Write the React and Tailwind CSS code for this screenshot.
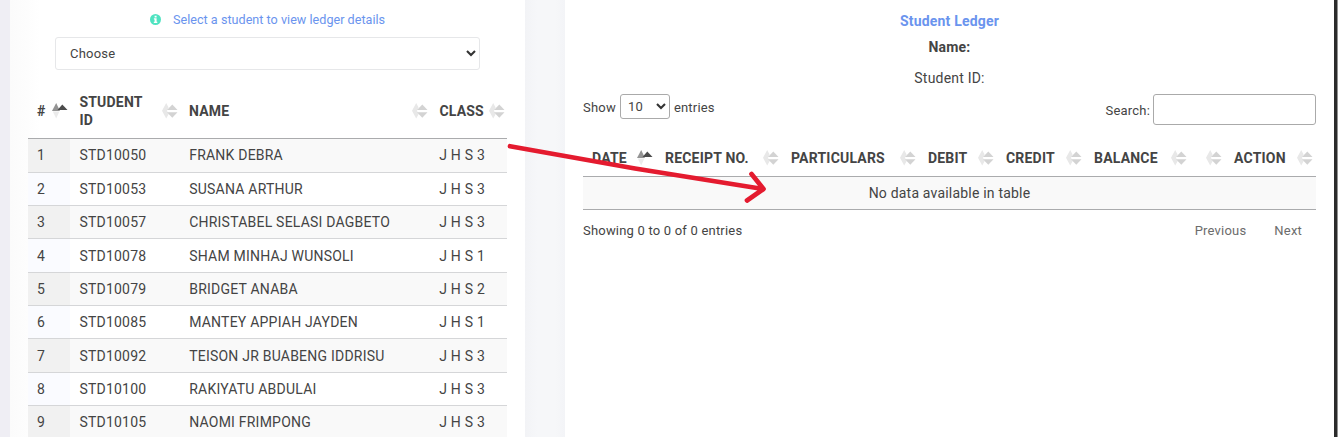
import React from "react";

function SortIcon({ active = false }) {
  return (
    <svg width="16" height="16" viewBox="0 0 16 16" className="block shrink-0">
      {active ? (
        <>
          <path d="M0 8L4.2 0L8 8Z" fill="#949494" />
          <path d="M0.8 8.4H7.4L4.2 15.5Z" fill="#ebebeb" />
          <path d="M5.5 6.9L10.3 1.5L15.5 6.9Z" fill="#4b4b4b" />
        </>
      ) : (
        <>
          <path d="M0 7.8L4.2 0L6.6 4.5L5 7.8L6.6 11.2L4.2 15.5Z" fill="#e8e8e8" />
          <path d="M5 7L10.3 1.5L15.5 7Z" fill="#d3d3d3" />
          <path d="M5 9.3H15.5L10.3 14.8Z" fill="#d3d3d3" />
        </>
      )}
    </svg>
  );
}

function Chevron() {
  return (
    <svg width="10" height="7" viewBox="0 0 10 7" className="shrink-0">
      <path d="M1 1L5 5L9 1" fill="none" stroke="#333" strokeWidth="2.1" />
    </svg>
  );
}

const students = [
  ["STD10050", "FRANK DEBRA", "J H S 3", "h-[34px] leading-[33px]"],
  ["STD10053", "SUSANA ARTHUR", "J H S 3", "h-[33px] leading-[32px]"],
  ["STD10057", "CHRISTABEL SELASI DAGBETO", "J H S 3", "h-[33px] leading-[32px]"],
  ["STD10078", "SHAM MINHAJ WUNSOLI", "J H S 1", "h-[34px] leading-[34px]"],
  ["STD10079", "BRIDGET ANABA", "J H S 2", "h-[33px] leading-[32px]"],
  ["STD10085", "MANTEY APPIAH JAYDEN", "J H S 1", "h-[33px] leading-[32px]"],
  ["STD10092", "TEISON JR BUABENG IDDRISU", "J H S 3", "h-[34px] leading-[34px]"],
  ["STD10100", "RAKIYATU ABDULAI", "J H S 3", "h-[33px] leading-[32px]"],
  ["STD10105", "NAOMI FRIMPONG", "J H S 3", "h-[33px] leading-[32px]"],
];

const studentGrid = "grid grid-cols-[42px_110px_250px_77px]";

const ledgerColumns = ["DATE", "RECEIPT NO.", "PARTICULARS", "DEBIT", "CREDIT", "BALANCE", "", "ACTION"];

function StudentPanel() {
  return (
    <section className="w-[515px] shrink-0 bg-[linear-gradient(90deg,#fbfbfb_0px,#fdfdfd_18px,#fff_30px)] pl-[18px]">
      <div className="flex h-[37px] items-center pt-[2px] pl-[122px] text-[12.6px]">
        <svg width="11" height="11" viewBox="0 0 11 11">
          <circle cx="5.5" cy="5.5" r="5.5" fill="#4fe3c1" />
          <path d="M4.6 1.7h2v1.7h-2zM3.9 4.3h2.7v3.4h.7v1.2H3.8V7.7h.8V5.5h-.7z" fill="#fff" />
        </svg>
        <span className="ml-3 pt-[2px] tracking-[0.02px] text-[#6a94ee]">Select a student to view ledger details</span>
      </div>
      <div className="ml-[27px] flex h-[33px] w-[425px] items-center justify-between rounded-[3px] border border-[#e6e7e9] bg-white pr-[3px] pl-[14px] text-[13px] tracking-[0.2px]">
        <span>Choose</span>
        <Chevron />
      </div>
      <div className="mt-[13px] w-[479px]">
        <div className={studentGrid + " h-[56px] items-center border-b border-[#aaabad] leading-[18px] font-bold"}>
          <div className="flex items-center justify-between pr-[2px] pl-[9px]">
            <span>#</span>
            <SortIcon active />
          </div>
          <div className="flex items-center justify-between pr-[2px] pl-[9.4px]">
            <span>
              STUDENT
              <br />
              ID
            </span>
            <SortIcon />
          </div>
          <div className="flex items-center justify-between pr-[2px] pl-[9px]">
            <span>NAME</span>
            <SortIcon />
          </div>
          <div className="flex items-center justify-between pr-[2px] pl-[9.4px]">
            <span>CLASS</span>
            <SortIcon />
          </div>
        </div>
        {students.map(([id, name, group, size], i) => (
          <div
            key={id}
            className={`${studentGrid} ${size} grid-rows-[minmax(0,1fr)] border-b border-[#d5d6d8] tracking-[0.22px] ${i % 2 === 0 ? "bg-[#f9f9f9]" : "bg-white"}`}
          >
            <span className={`pl-[9px] ${i % 2 === 0 ? "bg-[#f1f1f1]" : "bg-[#fafbff]"}`}>{i + 1}</span>
            <span className="pl-[9.4px]">{id}</span>
            <span className="pl-[9.2px]">{name}</span>
            <span className="pl-[9.2px]">{group}</span>
          </div>
        ))}
      </div>
    </section>
  );
}

function LedgerPanel() {
  return (
    <section className="w-[769px] shrink-0 bg-white pr-[18px] pl-[18px]">
      <div className="flex h-[94px] flex-col items-center pt-[11px]">
        <div className="h-[25px] leading-[21px] font-bold text-[#6a94ee]">Student Ledger</div>
        <div className="h-[31px] leading-[22px] font-bold">Name:</div>
        <div className="leading-[22px]">Student ID:</div>
      </div>
      <div className="flex h-[46px] items-start justify-between text-[13px] tracking-[0.2px]">
        <div className="flex items-center">
          <span className="pt-[3px]">Show</span>
          <span className="mx-[4px] flex h-[25px] w-[50px] items-center justify-between rounded-[3px] border border-[#aaa] pr-[3px] pl-[7px] text-[13px]">
            <span className="pt-px">10</span>
            <Chevron />
          </span>
          <span className="pt-[3px]">entries</span>
        </div>
        <div className="flex items-center">
          <span className="pt-[2px]">Search:</span>
          <span className="ml-[3px] h-[31px] w-[163px] rounded-[3px] border border-[#aaa]" />
        </div>
      </div>
      <div className="grid h-[37px] grid-cols-[73px_126px_137px_78px_88px_105px_35px_91px] items-center border-b border-[#aaabad] font-bold">
        {ledgerColumns.map((label) => (
          <div key={label} className="flex items-center justify-between pr-[3px] pl-[9px]">
            <span>{label}</span>
            <SortIcon active={label === "DATE"} />
          </div>
        ))}
      </div>
      <div className="h-[33px] border-b border-[#aaabad] bg-[#f9f9f9] text-center leading-[32px]">No data available in table</div>
      <div className="flex h-[42px] items-center justify-between text-[13px] tracking-[0.2px]">
        <span>Showing 0 to 0 of 0 entries</span>
        <div className="flex gap-[28px] pr-[14px] text-[#6c6c6c]">
          <span>Previous</span>
          <span>Next</span>
        </div>
      </div>
    </section>
  );
}

export default function App() {
  return (
    <main className="relative flex h-[437px] w-[1338px] overflow-hidden bg-[#f5f6fa] font-[Roboto,sans-serif] text-[14px] tracking-[0.2px] whitespace-nowrap text-[#444]">
      <div className="w-[10px] shrink-0 bg-[#efeef4]" />
      <StudentPanel />
      <div className="w-[40px] shrink-0 bg-[linear-gradient(90deg,#f2f3f6,#f6f7f9_12px,#f6f7f9_30px,#f3f4f7)]" />
      <LedgerPanel />
      <div className="w-[3px] shrink-0 bg-[#2b2b2b]" />
      <div className="w-px shrink-0 bg-[#929292]" />
      <svg className="absolute top-[135px] left-[500px]" width="280" height="80" viewBox="500 135 280 80">
        <path
          d="M510 146.2L635 168.5L763 189M751.5 174L763.5 189L747 200.5"
          fill="none"
          stroke="#e41b2f"
          strokeWidth="4.7"
          strokeLinecap="round"
          strokeLinejoin="round"
        />
      </svg>
    </main>
  );
}
